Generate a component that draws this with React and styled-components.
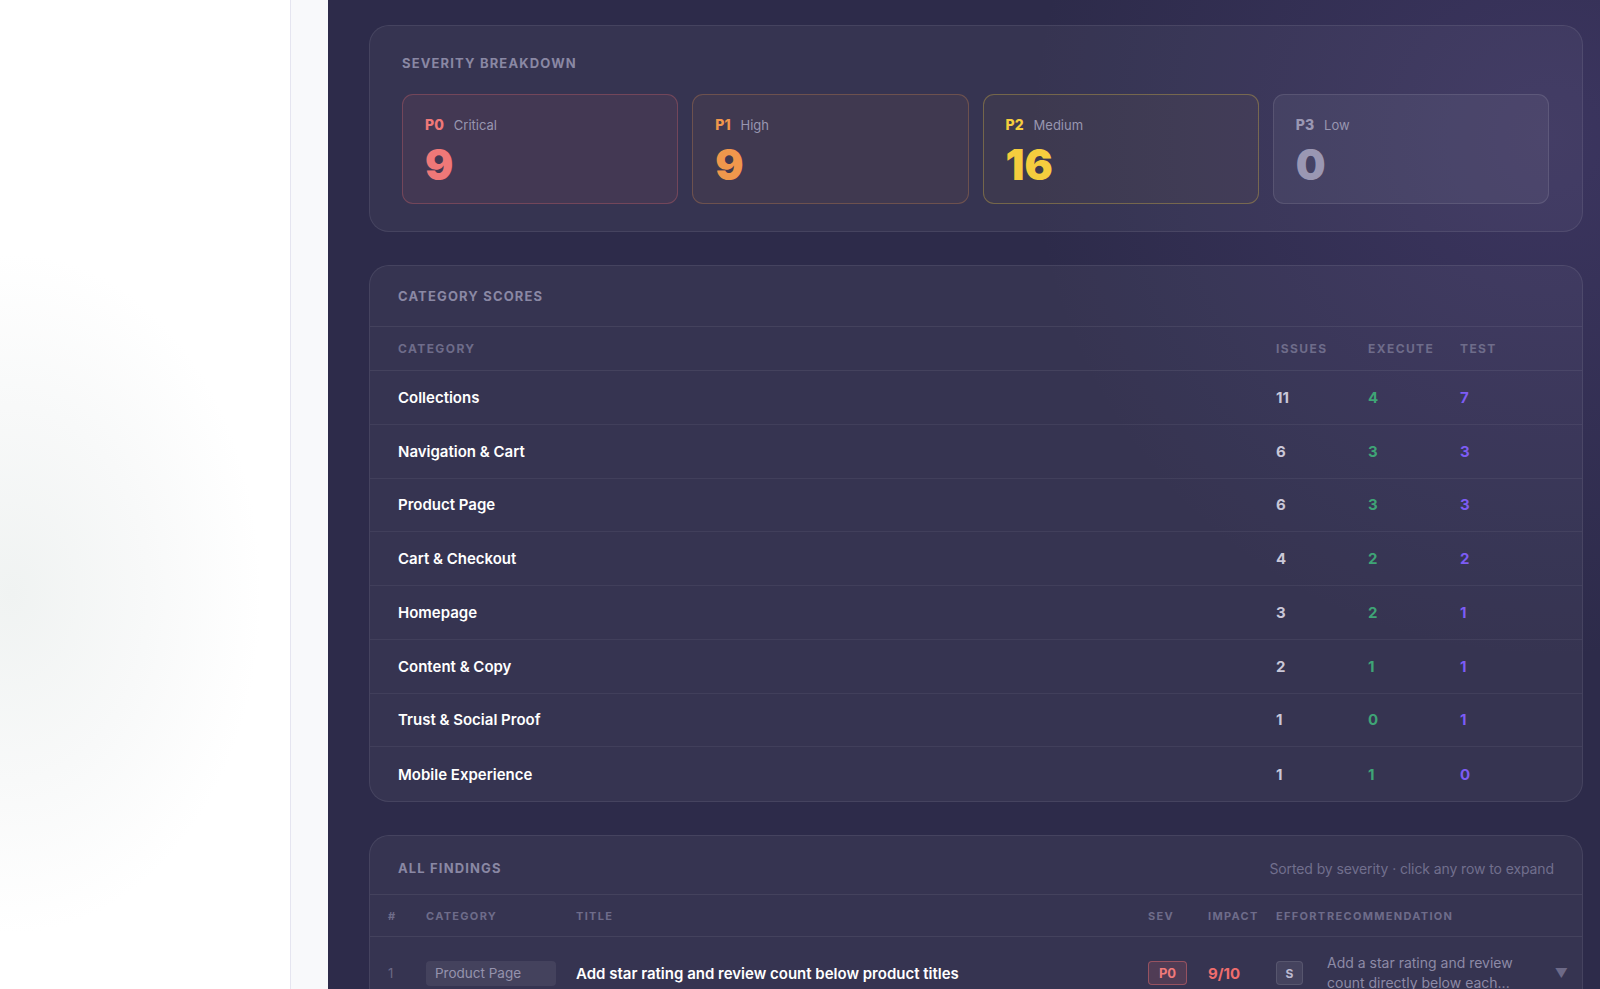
import React from 'react';
import styled, { createGlobalStyle } from 'styled-components';

const severities = [
  { code: 'P0', label: 'Critical', count: 9, tone: 'critical' },
  { code: 'P1', label: 'High', count: 9, tone: 'high' },
  { code: 'P2', label: 'Medium', count: 16, tone: 'medium' },
  { code: 'P3', label: 'Low', count: 0, tone: 'low' },
];

const tones = {
  critical: { fg: '#ef7878', bg: 'rgba(239, 110, 110, 0.07)', border: 'rgba(239, 110, 110, 0.28)' },
  high: { fg: '#f0974c', bg: 'rgba(240, 150, 76, 0.06)', border: 'rgba(240, 150, 76, 0.26)' },
  medium: { fg: '#f5cd3e', bg: 'rgba(245, 205, 62, 0.04)', border: 'rgba(245, 205, 62, 0.3)' },
  low: { fg: '#9a97b3', bg: 'rgba(255, 255, 255, 0.05)', border: 'rgba(255, 255, 255, 0.1)' },
};

const categories = [
  { name: 'Collections', issues: 11, execute: 4, test: 7 },
  { name: 'Navigation & Cart', issues: 6, execute: 3, test: 3 },
  { name: 'Product Page', issues: 6, execute: 3, test: 3 },
  { name: 'Cart & Checkout', issues: 4, execute: 2, test: 2 },
  { name: 'Homepage', issues: 3, execute: 2, test: 1 },
  { name: 'Content & Copy', issues: 2, execute: 1, test: 1 },
  { name: 'Trust & Social Proof', issues: 1, execute: 0, test: 1 },
  { name: 'Mobile Experience', issues: 1, execute: 1, test: 0 },
];

const findings = [
  {
    id: 1,
    category: 'Product Page',
    title: 'Add star rating and review count below product titles',
    sev: 'P0',
    impact: '9/10',
    effort: 'S',
    recommendation: 'Add a star rating and review count directly below each...',
  },
];

const GlobalStyle = createGlobalStyle`
  * {
    box-sizing: border-box;
  }

  body {
    margin: 0;
    overflow: hidden;
    font-family: Inter, "Noto Sans", "Liberation Sans", sans-serif;
  }
`;

const App = () => {
  return (
    <>
      <GlobalStyle />
      <Page>
        <Sidebar />
        <Gutter />
        <Main>
          <Card>
            <SeverityBody>
              <SectionLabel>Severity Breakdown</SectionLabel>
              <SeverityGrid>
                {severities.map(s => (
                  <SeverityBox key={s.code} $tone={s.tone}>
                    <SeverityHead>
                      <SeverityCode $tone={s.tone}>{s.code}</SeverityCode>
                      <SeverityName>{s.label}</SeverityName>
                    </SeverityHead>
                    <SeverityCount $tone={s.tone}>{s.count}</SeverityCount>
                  </SeverityBox>
                ))}
              </SeverityGrid>
            </SeverityBody>
          </Card>

          <Card>
            <CardHeader>
              <SectionLabel>Category Scores</SectionLabel>
            </CardHeader>
            <ScoreHeadRow>
              <ColHead>Category</ColHead>
              <ColHead>Issues</ColHead>
              <ColHead>Execute</ColHead>
              <ColHead>Test</ColHead>
            </ScoreHeadRow>
            {categories.map(c => (
              <ScoreRow key={c.name}>
                <CategoryName>{c.name}</CategoryName>
                <Num $color="#c9c7d8">{c.issues}</Num>
                <Num $color="#3fa476">{c.execute}</Num>
                <Num $color="#7d5cf4">{c.test}</Num>
              </ScoreRow>
            ))}
          </Card>

          <Card>
            <CardHeader $offset={6}>
              <SectionLabel>All Findings</SectionLabel>
              <HeaderNote>Sorted by severity · click any row to expand</HeaderNote>
            </CardHeader>
            <FindingsHeadRow>
              <SmallHead>#</SmallHead>
              <SmallHead>Category</SmallHead>
              <SmallHead>Title</SmallHead>
              <SmallHead>Sev</SmallHead>
              <SmallHead>Impact</SmallHead>
              <SmallHead>Effort</SmallHead>
              <SmallHead>Recommendation</SmallHead>
              <span />
            </FindingsHeadRow>
            {findings.map(f => (
              <FindingRow key={f.id}>
                <RowIndex>{f.id}</RowIndex>
                <div>
                  <CategoryPill>{f.category}</CategoryPill>
                </div>
                <FindingTitle>{f.title}</FindingTitle>
                <div>
                  <SevPill>{f.sev}</SevPill>
                </div>
                <Impact>{f.impact}</Impact>
                <div>
                  <EffortPill>{f.effort}</EffortPill>
                </div>
                <Recommendation>{f.recommendation}</Recommendation>
                <Chevron>▼</Chevron>
              </FindingRow>
            ))}
          </Card>
        </Main>
      </Page>
    </>
  );
};

const Page = styled.div`
  display: flex;
  height: 100vh;
  overflow: hidden;
`;

const Sidebar = styled.aside`
  flex: 0 0 291px;
  border-right: 1px solid #e5e5f0;
  background: radial-gradient(ellipse 250px 340px at 4% 60%, #f0f3f2 0%, #f8f9f9 55%, #ffffff 100%);
`;

const Gutter = styled.div`
  flex: 0 0 37px;
  background: #f8f9fb;
`;

const Main = styled.main`
  flex: 1;
  padding: 25px 17px 0 41px;
  background:
    radial-gradient(circle 520px at 96% 14%, rgba(110, 88, 170, 0.22), transparent 100%),
    #2d2b4a;
  overflow: hidden;
`;

const Card = styled.section`
  margin-bottom: 33px;
  border: 1px solid rgba(255, 255, 255, 0.08);
  border-radius: 20px;
  background: rgba(255, 255, 255, 0.045);
  overflow: hidden;
`;

const SeverityBody = styled.div`
  padding: 29px 33px 27px 32px;
`;

const SectionLabel = styled.h3`
  margin: 0;
  font-size: 13px;
  line-height: 16px;
  font-weight: 700;
  letter-spacing: 1.15px;
  text-transform: uppercase;
  color: #8a88a4;
`;

const SeverityGrid = styled.div`
  display: grid;
  grid-template-columns: repeat(4, 1fr);
  gap: 14px;
  margin-top: 23px;
`;

const SeverityBox = styled.div`
  height: 110px;
  padding: 21px 22px;
  border: 1px solid ${p => tones[p.$tone].border};
  border-radius: 11px;
  background: ${p => tones[p.$tone].bg};
`;

const SeverityHead = styled.div`
  display: flex;
  align-items: baseline;
  gap: 10px;
  line-height: 18px;
`;

const SeverityCode = styled.span`
  font-size: 14px;
  font-weight: 800;
  color: ${p => tones[p.$tone].fg};
`;

const SeverityName = styled.span`
  font-size: 13px;
  color: #9896b0;
`;

const SeverityCount = styled.div`
  margin-top: 10px;
  font-size: 42px;
  line-height: 42px;
  font-weight: 900;
  color: ${p => tones[p.$tone].fg};
`;

const CardHeader = styled.div`
  display: flex;
  align-items: center;
  justify-content: space-between;
  height: ${p => (p.$offset ? 59 : 61)}px;
  padding: ${p => p.$offset || 0}px 28px 0;
  border-bottom: 1px solid rgba(255, 255, 255, 0.07);
`;

const HeaderNote = styled.span`
  font-size: 14px;
  letter-spacing: -0.1px;
  color: #716f8d;
`;

const scoreColumns = `
  display: grid;
  grid-template-columns: 1fr 92px 92px 92px;
  align-items: center;
  padding: 0 30px 0 28px;
`;

const ScoreHeadRow = styled.div`
  ${scoreColumns}
  height: 44px;
  border-bottom: 1px solid rgba(255, 255, 255, 0.07);
`;

const ColHead = styled.span`
  font-size: 12px;
  font-weight: 700;
  letter-spacing: 1.4px;
  text-transform: uppercase;
  color: #6e6c8a;
`;

const ScoreRow = styled.div`
  ${scoreColumns}
  height: 53.75px;
  border-bottom: 1px solid rgba(255, 255, 255, 0.06);

  &:last-child {
    border-bottom: none;
  }
`;

const CategoryName = styled.span`
  font-size: 15px;
  font-weight: 600;
  color: #ffffff;
`;

const Num = styled.span`
  font-size: 15px;
  font-weight: 700;
  color: ${p => p.$color};
`;

const findingColumns = `
  display: grid;
  grid-template-columns: 38px 150px 1fr 60px 68px 51px 225px 16px;
  align-items: center;
  padding: 0 14px 0 18px;
`;

const FindingsHeadRow = styled.div`
  ${findingColumns}
  height: 42px;
  border-bottom: 1px solid rgba(255, 255, 255, 0.07);
`;

const SmallHead = styled.span`
  font-size: 11px;
  font-weight: 700;
  letter-spacing: 1.3px;
  text-transform: uppercase;
  white-space: nowrap;
  color: #6e6c8a;
`;

const FindingRow = styled.div`
  ${findingColumns}
  padding-top: 16px;
  padding-bottom: 16px;
  border-bottom: 1px solid rgba(255, 255, 255, 0.06);
`;

const RowIndex = styled.span`
  font-size: 13px;
  color: #6b6987;
`;

const CategoryPill = styled.span`
  display: inline-block;
  width: 130px;
  padding: 4px 9px;
  border-radius: 4px;
  background: rgba(255, 255, 255, 0.07);
  font-size: 13.5px;
  line-height: 17px;
  color: #9593ad;
`;

const FindingTitle = styled.span`
  font-size: 15px;
  font-weight: 600;
  color: #ffffff;
`;

const SevPill = styled.span`
  display: inline-flex;
  align-items: center;
  justify-content: center;
  width: 39px;
  height: 24px;
  border: 1px solid rgba(239, 110, 110, 0.45);
  border-radius: 4px;
  background: rgba(239, 110, 110, 0.14);
  font-size: 13px;
  font-weight: 700;
  color: #f07a7a;
`;

const Impact = styled.span`
  font-size: 15px;
  font-weight: 700;
  color: #ef6d6d;
`;

const EffortPill = styled.span`
  display: inline-flex;
  align-items: center;
  justify-content: center;
  width: 27px;
  height: 24px;
  border: 1px solid rgba(255, 255, 255, 0.1);
  border-radius: 4px;
  background: rgba(255, 255, 255, 0.08);
  font-size: 12px;
  font-weight: 700;
  color: #bcbad0;
`;

const Recommendation = styled.span`
  display: -webkit-box;
  -webkit-line-clamp: 2;
  -webkit-box-orient: vertical;
  overflow: hidden;
  padding-right: 22px;
  font-size: 14px;
  line-height: 20px;
  color: #8d8aa6;
`;

const Chevron = styled.span`
  justify-self: end;
  font-size: 13px;
  color: #6d6a88;
`;

export default App;
